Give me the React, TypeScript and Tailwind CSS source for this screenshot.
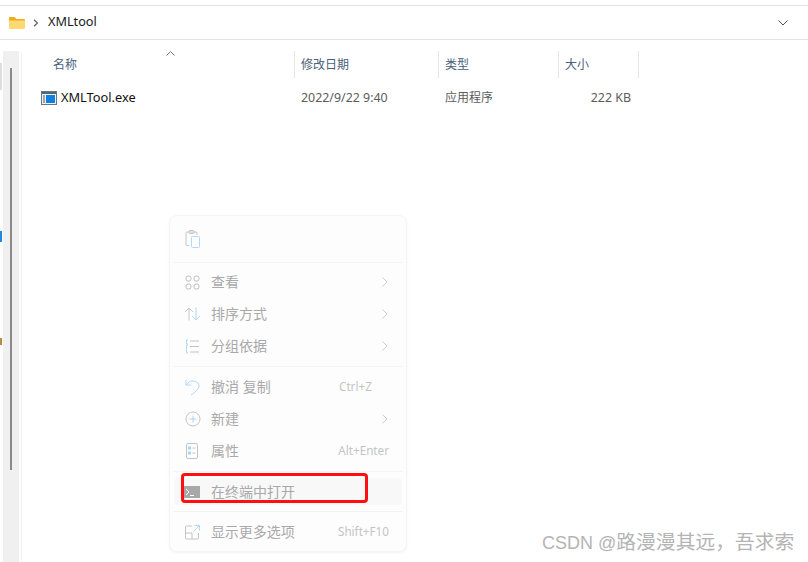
import type { ReactNode } from "react"

const FONT = "font-['Noto_Sans','Noto_Sans_CJK_SC',sans-serif]"

function Chevron() {
  return (
    <svg width="8" height="12" viewBox="0 0 8 12" fill="none" stroke="#d0d0d0" strokeWidth="1">
      <path d="M1.5 1.5 6 6l-4.500 4.500" />
    </svg>
  )
}

function MenuRow({
  icon,
  label,
  right,
  arrow,
}: {
  icon: ReactNode
  label: string
  right?: string
  arrow?: boolean
}) {
  return (
    <div className="flex h-8 items-center pl-[14px] pr-[17px]">
      <div className="flex w-[17px] justify-center">{icon}</div>
      <span className="ml-[10px] w-[128px] text-[14px] leading-none text-[#a9a9a9]">{label}</span>
      {right && <span className="text-[11.700px] text-[#c4c4c4]">{right}</span>}
      {arrow && <div className="ml-auto flex"><Chevron /></div>}
    </div>
  )
}

function Separator() {
  return <div className="mx-1 h-px bg-[#f3f3f3]" />
}

export default function App() {
  return (
    <div className={`relative h-[562px] w-[808px] overflow-hidden bg-white ${FONT}`}>
      {/* address bar */}
      <div className="pt-[5px]">
        <div className="flex h-[35px] items-center border-y border-[#e3e3e3] pl-[9px] pr-[20px]">
          <svg width="16" height="14" viewBox="0 0 16 14">
            <path d="M0 2a1 1 0 0 1 1-1h4.500l2 2H15a1 1 0 0 1 1 1v1H0z" fill="#f0ac1c" />
            <path d="M0 4.500h16V12a1 1 0 0 1-1 1H1a1 1 0 0 1-1-1z" fill="#fdd873" />
          </svg>
          <svg className="ml-[8px]" width="6" height="8" viewBox="0 0 6 8" fill="none" stroke="#666" strokeWidth="1.3">
            <path d="M1 .8 4.400 4 1 7.200" />
          </svg>
          <span className="mb-[2px] ml-[9px] text-[12.700px] text-[#1a1a1a]">XMLtool</span>
          <div className="flex-1" />
          <svg width="10" height="6" viewBox="0 0 10 6" fill="none" stroke="#555" strokeWidth="1">
            <path d="M.5.5 5 5 9.500.5" />
          </svg>
        </div>
      </div>

      {/* explorer body */}
      <div className="flex pt-[11px]">
        {/* nav pane edge, text cut off by the crop */}
        <div className="w-[3px] pt-[12px]">
          <div className="h-[27px] w-[2px] bg-[#dddddd]" />
          <div className="mt-[141px] h-[11px] w-[2px] bg-[#1e88e5]" />
          <div className="mt-[96px] h-[7px] w-[2px] bg-[#b98a4a]" />
        </div>
        <div className="h-[511px] w-[16px] bg-[#f0f0f0] pl-[7px] pt-[17px]">
          <div className="h-[402px] w-[2px] bg-[#8a8a8a]" />
        </div>
        <div className="ml-[2px] h-[511px] w-px bg-[#f3f3f3]" />

        {/* file list */}
        <div className="ml-[18px] flex-1">
          <div className="flex h-[27px] text-[12px] text-[#4c607a]">
            <div className="relative flex w-[254px] items-center pl-[13px]">
              名称
              <svg className="absolute left-[126px] top-0" width="9" height="5" viewBox="0 0 9 5" fill="none" stroke="#777" strokeWidth="1">
                <path d="M.5 4.500 4.500.5l4 4" />
              </svg>
            </div>
            <div className="flex w-[144px] items-center border-l border-[#e5e5e5] pl-[6px]">修改日期</div>
            <div className="flex w-[120px] items-center border-l border-[#e5e5e5] pl-[6px]">类型</div>
            <div className="flex w-[81px] items-center border-r border-l border-[#e5e5e5] pl-[6px]">大小</div>
          </div>
          <div className="mt-[8px] flex h-[24px] items-center text-[12px] text-[#5c5c5c]">
            <div className="flex w-[254px] items-center">
              <svg className="ml-[1px]" width="16" height="14" viewBox="0 0 16 14">
                <rect x="0.500" y="0.500" width="15" height="13" fill="#eef1f4" stroke="#6c7680" />
                <rect x="1" y="1" width="14" height="2" fill="#59636e" />
                <rect x="5" y="4" width="9" height="8" fill="#0f7fe0" />
                <rect x="2" y="4" width="2" height="8" fill="#9aa5b0" />
              </svg>
              <span className="ml-1 text-[12.800px] text-[#111]">XMLTool.exe</span>
            </div>
            <div className="w-[144px] pl-[7px] text-[12.400px]">2022/9/22 9:40</div>
            <div className="w-[120px] pl-[7px]">应用程序</div>
            <div className="w-[73px] text-right text-[12.400px]">222 KB</div>
          </div>
        </div>
      </div>

      {/* context menu */}
      <div className="absolute left-[169px] top-[215px] h-[337px] w-[238px] rounded-lg border border-[#f5f5f5] bg-[#fdfdfd] shadow-[0_1px_3px_rgba(0,0,0,0.05)]">
        <div className="flex h-[46px] items-center pl-[15px]">
          <svg width="16" height="18" viewBox="0 0 16 18" fill="none" stroke="#c4c4c4" strokeWidth="1">
            <path d="M4 15.500H2a1 1 0 0 1-1-1V3a1 1 0 0 1 1-1h9a1 1 0 0 1 1 1v2" />
            <rect x="4" y="0.500" width="5" height="3" rx="1" />
            <rect x="6.500" y="6.500" width="8" height="11" rx="1" stroke="#b3d7f5" />
          </svg>
        </div>
        <Separator />
        <div className="py-[3px]">
          <MenuRow
            label="查看"
            arrow
            icon={
              <svg width="15" height="15" viewBox="0 0 15 15" fill="none" stroke="#c0c0c0">
                <rect x="1" y="1" width="5" height="5" rx="2" />
                <rect x="9" y="1" width="5" height="5" rx="2" />
                <rect x="1" y="9" width="5" height="5" rx="2" />
                <rect x="9" y="9" width="5" height="5" rx="2" />
              </svg>
            }
          />
          <MenuRow
            label="排序方式"
            arrow
            icon={
              <svg width="17" height="14" viewBox="0 0 17 14" fill="none">
                <path d="M5 13.500V1M1 5l4-4 4 4" stroke="#c4c4c4" />
                <path d="M12 .5V13M8 9l4 4 4-4" stroke="#b3d7f5" />
              </svg>
            }
          />
          <MenuRow
            label="分组依据"
            arrow
            icon={
              <svg width="15" height="15" viewBox="0 0 15 15" fill="none">
                <path d="M5 2h9M5 7.500h9M5 13h9" stroke="#c4c4c4" />
                <path d="M3 1H1.500v4H3M3 6H1.500v8H3" stroke="#b3d7f5" />
              </svg>
            }
          />
        </div>
        <div className="mt-[1px]">
          <Separator />
        </div>
        <div className="pt-[4px]">
          <MenuRow
            label="撤消 复制"
            right="Ctrl+Z"
            icon={
              <svg width="15" height="17" viewBox="0 0 15 17" fill="none" stroke="#b3d7f5">
                <path d="M1 1v5h5M1 6l3-3c3-2 10-1 10 4 0 3-5 7-8 9" />
              </svg>
            }
          />
          <MenuRow
            label="新建"
            arrow
            icon={
              <svg width="16" height="16" viewBox="0 0 16 16" fill="none">
                <circle cx="8" cy="8" r="7" stroke="#c4c4c4" />
                <path d="M8 4.500v7M4.500 8h7" stroke="#a9d2f3" />
              </svg>
            }
          />
          <MenuRow
            label="属性"
            right="Alt+Enter"
            icon={
              <svg width="12" height="16" viewBox="0 0 12 16" fill="none">
                <rect x="0.500" y="0.500" width="11" height="15" rx="1.500" stroke="#c4c4c4" />
                <rect x="2.500" y="4" width="2" height="2" stroke="#a9d2f3" />
                <rect x="2.500" y="9" width="2" height="2" stroke="#a9d2f3" />
                <path d="M6.500 5h3M6.500 10h3" stroke="#c4c4c4" />
              </svg>
            }
          />
        </div>
        <div className="mt-[4px]">
          <Separator />
        </div>
        <div className="mx-[4px] mt-[6px] flex h-[27px] items-center rounded bg-[#f8f8f8] pl-[10px]">
          <svg width="16" height="12" viewBox="0 0 16 12">
            <rect width="16" height="12" fill="#a8a8a8" />
            <path d="M2 3l3 3-3 3" fill="none" stroke="#fff" strokeWidth="1" />
            <path d="M6 9.500h4" stroke="#fff" strokeWidth="1" />
          </svg>
          <span className="ml-[11px] text-[14px] leading-none text-[#a9a9a9]">在终端中打开</span>
        </div>
        <div className="mt-[6px]">
          <Separator />
        </div>
        <div className="pt-[4px]">
          <MenuRow
            label="显示更多选项"
            right="Shift+F10"
            icon={
              <svg width="15" height="15" viewBox="0 0 15 15" fill="none">
                <path d="M7 1H1.500a1 1 0 0 0-1 1v11a1 1 0 0 0 1 1h11a1 1 0 0 0 1-1V8M.5 8H7v6" stroke="#c4c4c4" />
                <path d="M9.500.5h5v5M14.500.5 8.500 6.500" stroke="#b3d7f5" />
              </svg>
            }
          />
        </div>
      </div>

      {/* annotation */}
      <div className="absolute left-[181px] top-[473px] h-[30px] w-[187px] rounded-sm border-[3px] border-[#fb0f0f]" />

      {/* watermark */}
      <div className="absolute left-[542px] top-[529px] flex items-baseline leading-[26px] text-[#b4b4b4]">
        <span className="font-['Liberation_Sans',sans-serif] text-[18px]">CSDN @</span>
        <span className="text-[19.800px]">路漫漫其远，吾求索</span>
      </div>
    </div>
  )
}
